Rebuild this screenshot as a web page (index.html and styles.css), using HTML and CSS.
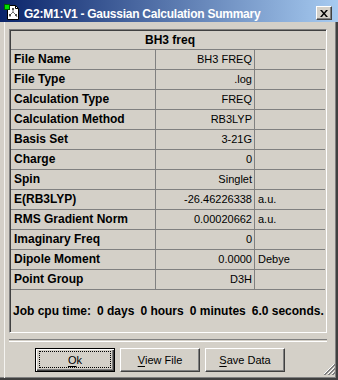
FILE: index.html
```html
<!DOCTYPE html>
<html>
<head>
    <title>Gaussian Calculation Summary</title>
    <meta charset="UTF-8">
    <link rel="stylesheet" href="styles.css">
</head>
<body>
    <div class="window">
        <div class="titlebar">
            <svg class="app-icon" width="16" height="16" viewBox="0 0 16 16">
                <path d="M3.5 1.5h8l3 3v11h-11z" fill="#fff" stroke="#000"/>
                <path d="M11.5 1.5v3h3" fill="none" stroke="#000"/>
                <rect x="0.5" y="0.5" width="5" height="5" fill="#00e000" stroke="#006000"/>
                <path d="M9 5v3M9 8l-3 3M9 8l3 3M6 11v2M12 11l1 2" stroke="#707070" fill="none"/>
                <rect x="8" y="4" width="2" height="2" fill="#505050"/>
                <rect x="5" y="10" width="2" height="2" fill="#505050"/>
                <rect x="11" y="10" width="2" height="2" fill="#505050"/>
            </svg>
            <span class="title">G2:M1:V1 - Gaussian Calculation Summary</span>
            <button class="close-button" type="button">
                <svg width="8" height="7" viewBox="0 0 8 7">
                    <path d="M0 0h2l2 2.5 2-2.5h2l-3 3.5 3 3.5h-2l-2-2.5-2 2.5h-2l3-3.5z" fill="#000"/>
                </svg>
            </button>
        </div>

        <div class="client">
            <div class="summary">
                <div class="summary-head">BH3 freq</div>

                <div class="row"><span class="label">File Name</span><span class="value">BH3 FREQ</span><span class="unit"></span></div>
                <div class="row"><span class="label">File Type</span><span class="value">.log</span><span class="unit"></span></div>
                <div class="row"><span class="label">Calculation Type</span><span class="value">FREQ</span><span class="unit"></span></div>
                <div class="row"><span class="label">Calculation Method</span><span class="value">RB3LYP</span><span class="unit"></span></div>
                <div class="row"><span class="label">Basis Set</span><span class="value">3-21G</span><span class="unit"></span></div>
                <div class="row"><span class="label">Charge</span><span class="value">0</span><span class="unit"></span></div>
                <div class="row"><span class="label">Spin</span><span class="value">Singlet</span><span class="unit"></span></div>
                <div class="row"><span class="label">E(RB3LYP)</span><span class="value">-26.46226338</span><span class="unit">a.u.</span></div>
                <div class="row"><span class="label">RMS Gradient Norm</span><span class="value">0.00020662</span><span class="unit">a.u.</span></div>
                <div class="row"><span class="label">Imaginary Freq</span><span class="value">0</span><span class="unit"></span></div>
                <div class="row"><span class="label">Dipole Moment</span><span class="value">0.0000</span><span class="unit">Debye</span></div>
                <div class="row"><span class="label">Point Group</span><span class="value">D3H</span><span class="unit"></span></div>

                <div class="cpu-time">
                    <span>Job cpu time:</span>
                    <span>0 days</span>
                    <span>0 hours</span>
                    <span>0 minutes</span>
                    <span>6.0 seconds.</span>
                </div>
            </div>

            <div class="separator"></div>

            <div class="buttons">
                <button type="button" class="btn btn-default"><span class="btn-face"><u>O</u>k</span></button>
                <button type="button" class="btn"><span class="btn-face"><u>V</u>iew File</span></button>
                <button type="button" class="btn"><span class="btn-face"><u>S</u>ave Data</span></button>
            </div>
        </div>

        <svg class="grip" width="12" height="12" viewBox="0 0 12 12">
            <path d="M11 1L1 11M11 5L5 11M11 9L9 11" stroke="#fff"/>
            <path d="M12 1L1 12M12 2L2 12M12 5L5 12M12 6L6 12M12 9L9 12M12 10L10 12" stroke="#808080"/>
        </svg>
    </div>
</body>
</html>
```

FILE: styles.css
```css
body {
    margin: 0;
    background-color: #d4d0c8;
    font-family: "Liberation Sans", Arial, sans-serif;
    font-size: 11px;
    color: #000;
}

.window {
    position: relative;
    width: 338px;
    height: 380px;
    box-sizing: border-box;
    display: flex;
    flex-direction: column;
    background-color: #d4d0c8;
    border-bottom: 2px solid #404040;
    box-shadow: inset -1px -1px #808080;
}

.titlebar {
    height: 22px;
    flex-shrink: 0;
    display: flex;
    align-items: flex-end;
    padding: 0 6px 2px 4px;
    box-sizing: border-box;
    background: linear-gradient(to right, #0a246a, #a6caf0);
}

.app-icon {
    display: block;
    flex-shrink: 0;
}

.title {
    flex: 1;
    margin-left: 4px;
    color: #fff;
    font-weight: bold;
    font-size: 12px;
    letter-spacing: -0.25px;
    line-height: 12px;
    white-space: nowrap;
}

.close-button {
    width: 16px;
    height: 14px;
    padding: 0;
    display: flex;
    align-items: center;
    justify-content: center;
    background-color: #d4d0c8;
    border: 1px solid;
    border-color: #fff #404040 #404040 #fff;
    box-shadow: inset -1px -1px #808080;
}

.close-button svg {
    display: block;
}

.client {
    flex: 1;
    display: flex;
    flex-direction: column;
    margin-left: 4px;
    padding: 7px 9px 0 4px;
    border-left: 1px solid #f4f3f0;
    border-right: 2px solid #404040;
    box-shadow: inset -1px 0 #808080;
}

.summary {
    height: 304px;
    box-sizing: border-box;
    display: flex;
    flex-direction: column;
    padding: 1px;
    border: 1px solid;
    border-color: #808080 #fff #fff #808080;
    box-shadow: inset 1px 1px #404040, inset -1px -1px #d4d0c8;
}

.summary-head {
    height: 19px;
    box-sizing: border-box;
    border-bottom: 1px solid #808080;
    text-align: center;
    font-weight: bold;
    font-size: 12px;
    line-height: 18px;
    padding-left: 4px;
}

.row {
    display: grid;
    grid-template-columns: 145px 99px 1fr;
    height: 20px;
    box-sizing: border-box;
    border-bottom: 1px solid #808080;
    line-height: 19px;
}

.label {
    padding-left: 3px;
    font-weight: bold;
    font-size: 12px;
    border-right: 1px solid #808080;
    white-space: nowrap;
}

.value {
    padding-right: 2px;
    text-align: right;
    border-right: 1px solid #808080;
}

.unit {
    padding-left: 3px;
}

.cpu-time {
    flex: 1;
    display: flex;
    align-items: center;
    gap: 6px;
    padding-left: 2px;
    font-weight: bold;
    font-size: 12px;
    white-space: nowrap;
}

.separator {
    margin-top: 6px;
    height: 1px;
    border-top: 1px solid #808080;
    border-bottom: 1px solid #fff;
}

.buttons {
    display: flex;
    gap: 5px;
    margin-top: 6px;
    padding-left: 26px;
}

.btn {
    width: 80px;
    height: 24px;
    padding: 0;
    display: flex;
    font-family: "Liberation Sans", Arial, sans-serif;
    font-size: 11px;
    color: #000;
    background-color: #d4d0c8;
    border: 1px solid;
    border-color: #fff #404040 #404040 #fff;
    box-shadow: inset -1px -1px #808080;
}

.btn-default {
    border-color: #000;
    box-shadow: inset 1px 1px #fff, inset -1px -1px #404040, inset -2px -2px #808080;
}

.btn-face {
    flex: 1;
    margin: 2px 3px 3px 3px;
    display: flex;
    align-items: center;
    justify-content: center;
    border: 1px dotted transparent;
}

.btn-default .btn-face {
    border-color: #000;
}

.btn u {
    text-decoration-thickness: 1px;
    text-underline-offset: 2px;
}

.grip {
    position: absolute;
    right: 3px;
    bottom: 3px;
}
```
